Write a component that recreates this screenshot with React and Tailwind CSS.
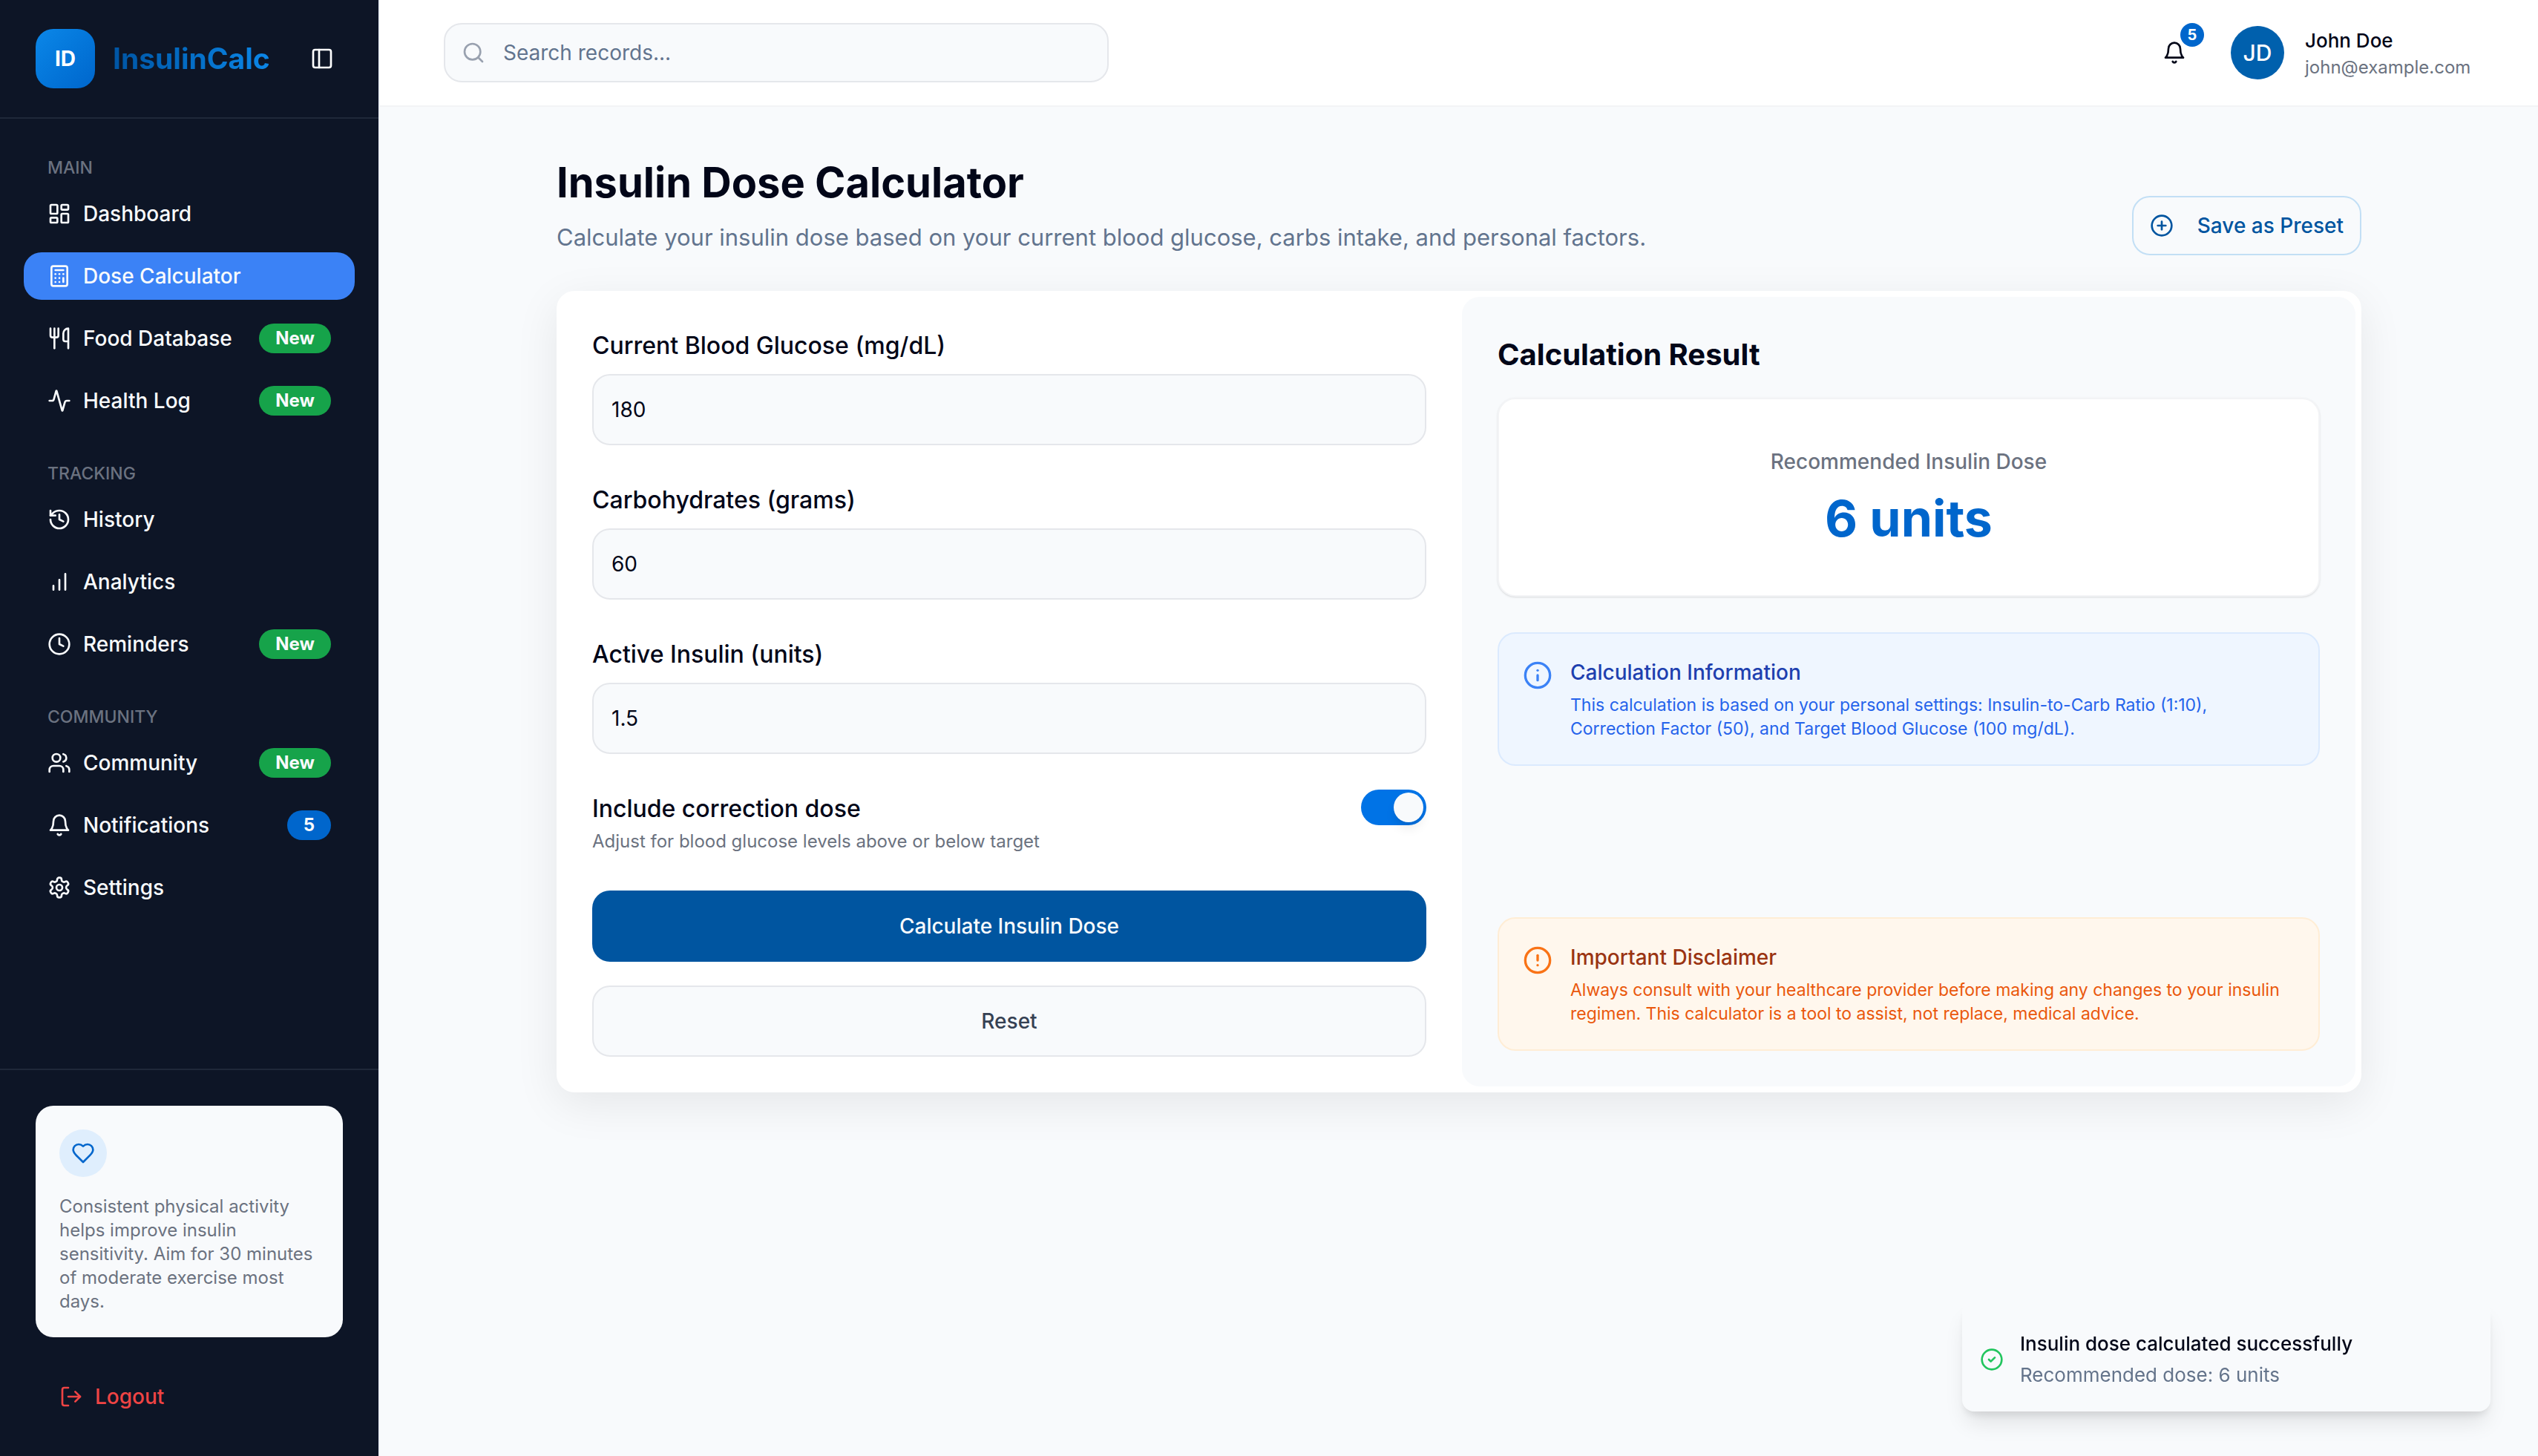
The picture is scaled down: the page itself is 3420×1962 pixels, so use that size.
import React, { useState } from "react";
import {
  Activity,
  Calculator,
  CircleAlert,
  CircleCheck,
  CirclePlus,
  Clock,
  History,
  Info,
  LayoutDashboard,
  LogOut,
  PanelLeft,
  Search,
  Users,
  Utensils,
} from "lucide-react";

function Glyph({ children, className }) {
  return (
    <svg
      viewBox="0 0 24 24"
      fill="none"
      stroke="currentColor"
      strokeWidth="2"
      strokeLinecap="round"
      strokeLinejoin="round"
      className={className}
      aria-hidden="true"
    >
      {children}
    </svg>
  );
}

function Bell({ className }) {
  return (
    <Glyph className={className}>
      <path d="M6 8a6 6 0 0 1 12 0c0 7 3 9 3 9H3s3-2 3-9" />
      <path d="M10.3 21a1.94 1.94 0 0 0 3.4 0" />
    </Glyph>
  );
}

function Bars({ className }) {
  return (
    <Glyph className={className}>
      <path d="M12 20V10M18 20V4M6 20v-4" />
    </Glyph>
  );
}

function Gear({ className }) {
  return (
    <Glyph className={className}>
      <path d="M12.22 2h-.44a2 2 0 0 0-2 2v.18a2 2 0 0 1-1 1.73l-.43.25a2 2 0 0 1-2 0l-.15-.08a2 2 0 0 0-2.73.73l-.22.38a2 2 0 0 0 .73 2.73l.15.1a2 2 0 0 1 1 1.72v.51a2 2 0 0 1-1 1.74l-.15.09a2 2 0 0 0-.73 2.73l.22.38a2 2 0 0 0 2.73.73l.15-.08a2 2 0 0 1 2 0l.43.25a2 2 0 0 1 1 1.73V20a2 2 0 0 0 2 2h.44a2 2 0 0 0 2-2v-.18a2 2 0 0 1 1-1.73l.43-.25a2 2 0 0 1 2 0l.15.08a2 2 0 0 0 2.73-.73l.22-.39a2 2 0 0 0-.73-2.73l-.15-.08a2 2 0 0 1-1-1.74v-.5a2 2 0 0 1 1-1.74l.15-.09a2 2 0 0 0 .73-2.73l-.22-.38a2 2 0 0 0-2.73-.73l-.15.08a2 2 0 0 1-2 0l-.43-.25a2 2 0 0 1-1-1.73V4a2 2 0 0 0-2-2z" />
      <circle cx="12" cy="12" r="3" />
    </Glyph>
  );
}

function Heart({ className }) {
  return (
    <Glyph className={className}>
      <path d="M19 14c1.49-1.46 3-3.21 3-5.5A5.5 5.5 0 0 0 16.5 3c-1.76 0-3 .5-4.5 2-1.5-1.5-2.74-2-4.5-2A5.5 5.5 0 0 0 2 8.5c0 2.3 1.5 4.05 3 5.5l7 7Z" />
    </Glyph>
  );
}

const sections = [
  {
    title: "MAIN",
    items: [
      { label: "Dashboard", icon: LayoutDashboard },
      { label: "Dose Calculator", icon: Calculator, active: true },
      { label: "Food Database", icon: Utensils, badge: "New" },
      { label: "Health Log", icon: Activity, badge: "New" },
    ],
  },
  {
    title: "TRACKING",
    items: [
      { label: "History", icon: History },
      { label: "Analytics", icon: Bars },
      { label: "Reminders", icon: Clock, badge: "New" },
    ],
  },
  {
    title: "COMMUNITY",
    items: [
      { label: "Community", icon: Users, badge: "New" },
      { label: "Notifications", icon: Bell, badge: "5" },
      { label: "Settings", icon: Gear },
    ],
  },
];

function NavItem({ label, icon: Icon, badge, active }) {
  return (
    <li>
      <a
        href="#"
        aria-current={active ? "page" : undefined}
        className={
          "flex h-16 items-center gap-4 rounded-3xl px-8 text-[28px] font-medium whitespace-nowrap text-[#f8fafc] " +
          (active ? "bg-[#3b82f6]" : "")
        }
      >
        <Icon className="size-8 shrink-0" />
        {label}
        {badge && (
          <span
            className={
              "ml-auto flex h-10 items-center rounded-full px-[22px] text-[24px] font-bold " +
              (badge === "New" ? "bg-[#16a34a]" : "bg-[#0066cc]")
            }
          >
            {badge}
          </span>
        )}
      </a>
    </li>
  );
}

function Sidebar() {
  return (
    <aside className="flex w-[512px] shrink-0 flex-col border-r-2 border-[#eef2ff] bg-[#0d1526]">
      <div className="flex h-40 items-center border-b-2 border-[#1f2839] px-12">
        <div className="flex size-20 items-center justify-center rounded-3xl bg-linear-to-br from-[#0c87e8] to-[#0066cc] text-[28px] font-bold text-white">
          ID
        </div>
        <span className="ml-6 bg-linear-to-r from-[#0055a4] to-[#0c87e8] bg-clip-text text-[39px] font-bold text-transparent">
          InsulinCalc
        </span>
        <button type="button" aria-label="Toggle sidebar" className="ml-auto p-3 text-white">
          <PanelLeft className="size-8" />
        </button>
      </div>

      <nav className="flex flex-1 flex-col gap-12 px-8 pt-12">
        {sections.map((section) => (
          <div key={section.title}>
            <h2 className="px-8 text-[23px] leading-9 font-medium text-[#6b7280]">{section.title}</h2>
            <ul className="mt-3 flex flex-col gap-5">
              {section.items.map((item) => (
                <NavItem key={item.label} {...item} />
              ))}
            </ul>
          </div>
        ))}
      </nav>

      <div className="border-t-2 border-[#1f2839] px-12 pt-12 pb-8">
        <div className="rounded-3xl bg-slate-50 p-8">
          <div className="flex size-16 items-center justify-center rounded-full bg-[#dfeefd] text-[#0066cc]">
            <Heart className="size-8" />
          </div>
          <p className="mt-6 text-[24px] leading-8 text-[#6b7280]">
            Consistent physical activity helps improve insulin sensitivity. Aim for 30 minutes of moderate exercise
            most days.
          </p>
        </div>
        <button
          type="button"
          className="mt-8 flex h-24 w-full items-center gap-4 px-8 text-[28px] font-medium text-[#ef4444]"
        >
          <LogOut className="size-8" />
          Logout
        </button>
      </div>
    </aside>
  );
}

function TopBar() {
  return (
    <header className="flex h-36 items-center justify-between border-b-2 border-gray-100 bg-white px-[86px]">
      <div className="flex h-20 w-[896px] items-center gap-6 rounded-3xl border-2 border-gray-200 bg-slate-50 px-[22px]">
        <Search className="size-8 shrink-0 text-gray-400" />
        <input
          type="search"
          aria-label="Search records"
          placeholder="Search records..."
          className="h-12 w-full bg-transparent text-[28px] text-slate-900 outline-none placeholder:text-slate-500"
        />
      </div>
      <div className="flex items-center">
        <button type="button" aria-label="Notifications, 5 unread" className="relative p-6 text-slate-950">
          <Bell className="size-8" />
          <span className="absolute top-0 right-0 flex size-8 items-center justify-center rounded-full bg-[#0066cc] text-[20px] font-bold text-white">
            5
          </span>
        </button>
        <div className="ml-9 flex size-[72px] items-center justify-center rounded-full bg-[#0060ad] text-[30px] font-medium text-white">
          JD
        </div>
        <div className="ml-7 min-w-[228px] pt-1">
          <p className="text-[26px] leading-9 font-medium text-slate-950">John Doe</p>
          <p className="text-[24px] leading-9 text-[#6b7280]">john@example.com</p>
        </div>
      </div>
    </header>
  );
}

function Field({ id, label, value, onChange }) {
  return (
    <div className="flex flex-col gap-3">
      <label htmlFor={id} className="text-[32px] leading-[52px] font-medium text-slate-950">
        {label}
      </label>
      <input
        id={id}
        type="text"
        inputMode="decimal"
        value={value}
        onChange={(e) => onChange(e.target.value)}
        className="h-24 w-full rounded-3xl border-2 border-gray-200 bg-slate-50 px-6 text-[28px] text-slate-950 outline-none"
      />
    </div>
  );
}

const noteTones = {
  blue: {
    box: "border-[#dbeafe] bg-[#eff6ff]",
    icon: "text-[#3b82f6]",
    title: "text-[#1e40af]",
    body: "text-[#2563eb]",
  },
  orange: {
    box: "border-[#ffedd5] bg-[#fff7ed]",
    icon: "text-[#f97316]",
    title: "text-[#9a3412]",
    body: "text-[#ea580c]",
  },
};

function Note({ tone, icon: Icon, title, children, className }) {
  const t = noteTones[tone];
  return (
    <div className={"flex gap-6 rounded-3xl border-2 p-8 " + t.box + " " + className}>
      <Icon className={"mt-1 size-10 shrink-0 " + t.icon} />
      <div>
        <h3 className={"text-[28px] leading-10 font-medium " + t.title}>{title}</h3>
        <p className={"mt-2 text-[23px] leading-8 " + t.body}>{children}</p>
      </div>
    </div>
  );
}

function CalculatorForm() {
  const [glucose, setGlucose] = useState("180");
  const [carbs, setCarbs] = useState("60");
  const [active, setActive] = useState("1.5");
  const [correction, setCorrection] = useState(true);
  return (
    <form className="flex flex-col gap-12 p-10" onSubmit={(e) => e.preventDefault()}>
      <Field id="glucose" label="Current Blood Glucose (mg/dL)" value={glucose} onChange={setGlucose} />
      <Field id="carbs" label="Carbohydrates (grams)" value={carbs} onChange={setCarbs} />
      <Field id="active" label="Active Insulin (units)" value={active} onChange={setActive} />
      <div className="flex items-start justify-between">
        <div>
          <label htmlFor="correction" className="block text-[32px] leading-[52px] font-medium text-slate-950">
            Include correction dose
          </label>
          <p className="text-[24px] leading-9 text-[#6b7280]">
            Adjust for blood glucose levels above or below target
          </p>
        </div>
        <input
          id="correction"
          type="checkbox"
          role="switch"
          checked={correction}
          onChange={(e) => setCorrection(e.target.checked)}
          className="flex h-12 w-[88px] shrink-0 appearance-none items-center rounded-full bg-gray-300 px-1 before:size-10 before:rounded-full before:bg-slate-50 before:shadow-lg checked:justify-end checked:bg-[#0073e6]"
        />
      </div>
      <div className="flex flex-col gap-8">
        <button type="submit" className="h-24 rounded-3xl bg-[#0055a0] text-[28px] font-medium text-slate-50">
          Calculate Insulin Dose
        </button>
        <button
          type="reset"
          className="h-24 rounded-3xl border-2 border-gray-200 bg-slate-50 text-[28px] font-medium text-gray-700"
        >
          Reset
        </button>
      </div>
    </form>
  );
}

function Result() {
  return (
    <section className="flex flex-col rounded-3xl bg-slate-50 p-12">
      <h2 className="text-[40px] leading-[60px] font-bold text-slate-950">Calculation Result</h2>
      <div className="mt-7 rounded-3xl border-2 border-gray-100 bg-white p-16 text-center shadow-sm">
        <p className="text-[28px] leading-10 font-medium text-[#6b7280]">Recommended Insulin Dose</p>
        <p className="mt-4 text-[68px] leading-[80px] font-bold text-[#0066cc]">6 units</p>
      </div>
      <Note tone="blue" icon={Info} title="Calculation Information" className="mt-12">
        This calculation is based on your personal settings: Insulin-to-Carb Ratio (1:10), Correction Factor (50), and
        Target Blood Glucose (100 mg/dL).
      </Note>
      <Note tone="orange" icon={CircleAlert} title="Important Disclaimer" className="mt-auto">
        Always consult with your healthcare provider before making any changes to your insulin regimen. This calculator
        is a tool to assist, not replace, medical advice.
      </Note>
    </section>
  );
}

function Toast() {
  return (
    <div
      role="status"
      className="fixed right-16 bottom-[60px] flex w-[712px] items-center gap-[22px] rounded-2xl bg-slate-50 px-6 pt-9 pb-7 shadow-[0_20px_30px_-6px_rgba(0,0,0,0.1),0_8px_12px_-4px_rgba(0,0,0,0.1)]"
    >
      <CircleCheck className="size-8 shrink-0 text-[#22c55e]" />
      <div>
        <p className="text-[26px] leading-[42px] font-medium text-slate-950">Insulin dose calculated successfully</p>
        <p className="text-[26px] leading-[42px] text-[#64748b]">Recommended dose: 6 units</p>
      </div>
    </div>
  );
}

export default function App() {
  return (
    <div className="flex min-h-screen bg-slate-50 font-['Inter','Liberation_Sans',sans-serif]">
      <Sidebar />
      <div className="flex min-w-0 flex-1 flex-col">
        <TopBar />
        <main className="mx-auto w-full max-w-[2560px] px-16 pt-16">
          <div className="flex items-end justify-between">
            <div>
              <h1 className="text-[56px] leading-[76px] font-bold text-slate-950">Insulin Dose Calculator</h1>
              <p className="mt-3 text-[31px] leading-[48px] text-slate-500">
                Calculate your insulin dose based on your current blood glucose, carbs intake, and personal factors.
              </p>
            </div>
            <button
              type="button"
              className="flex h-20 items-center gap-8 rounded-3xl border-2 border-[#c2dff5] px-[22px] text-[28px] font-medium text-[#0055a0]"
            >
              <CirclePlus className="size-8" />
              Save as Preset
            </button>
          </div>
          <div className="mt-12 grid grid-cols-2 gap-2 rounded-3xl bg-white p-2 shadow-[0_16px_60px_rgba(0,0,0,0.08)]">
            <CalculatorForm />
            <Result />
          </div>
        </main>
      </div>
      <Toast />
    </div>
  );
}
